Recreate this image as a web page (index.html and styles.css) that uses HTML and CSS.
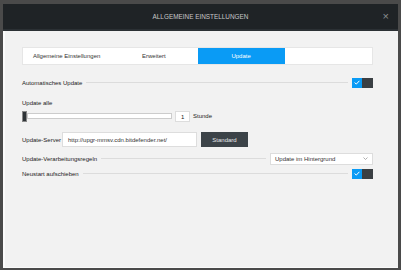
FILE: index.html
```html
<!DOCTYPE html>
<html lang="de">
<head>
    <meta charset="UTF-8">
    <title>Allgemeine Einstellungen</title>
    <link rel="stylesheet" href="styles.css">
</head>
<body>

<div class="dialog">
    <!-- Header -->
    <div class="dialog-header">
        <span class="dialog-title">ALLGEMEINE EINSTELLUNGEN</span>
        <span class="close-btn">&times;</span>
    </div>

    <div class="dialog-body">
        <!-- Tabs -->
        <div class="tabs">
            <div class="tab">Allgemeine Einstellungen</div>
            <div class="tab">Erweitert</div>
            <div class="tab active">Update</div>
            <div class="tab"></div>
        </div>

        <div class="row line-row first-row">
            <span class="label">Automatisches Update</span>
            <span class="rule"></span>
            <div class="toggle">
                <span class="toggle-on">
                    <svg width="6" height="5" viewBox="0 0 6 5"><path d="M0.6 2.6 L2.3 4.1 L5.4 0.8" fill="none" stroke="#fff" stroke-width="1"/></svg>
                </span>
                <span class="toggle-off"></span>
            </div>
        </div>

        <div class="label block-label">Update alle</div>
        <div class="row slider-row">
            <div class="slider">
                <span class="slider-handle"></span>
                <span class="slider-track"></span>
            </div>
            <div class="small-input">1</div>
            <span class="label">Stunde</span>
        </div>

        <div class="row server-row">
            <span class="label">Update-Server</span>
            <div class="text-input">http://upgr-mmsv.cdn.bitdefender.net/</div>
            <button class="std-btn">Standard</button>
        </div>

        <div class="row line-row rules-row">
            <span class="label">Update-Verarbeitungsregeln</span>
            <span class="rule"></span>
            <div class="select">
                <span>Update im Hintergrund</span>
                <svg width="5" height="3" viewBox="0 0 5 3"><path d="M0.5 0.5 L2.5 2.5 L4.5 0.5" fill="none" stroke="#999" stroke-width="0.8"/></svg>
            </div>
        </div>

        <div class="row line-row">
            <span class="label">Neustart aufschieben</span>
            <span class="rule"></span>
            <div class="toggle">
                <span class="toggle-on">
                    <svg width="6" height="5" viewBox="0 0 6 5"><path d="M0.6 2.6 L2.3 4.1 L5.4 0.8" fill="none" stroke="#fff" stroke-width="1"/></svg>
                </span>
                <span class="toggle-off"></span>
            </div>
        </div>
    </div>
</div>

</body>
</html>
```

FILE: styles.css
```css
body {
    margin: 0;
    background-color: #4a4a4a;
    font-family: "Liberation Sans", Arial, sans-serif;
    font-size: 6px;
    color: #222;
}

.dialog {
    margin: 4px 3px 0 3px;
    height: 263px;
    display: flex;
    flex-direction: column;
    background-color: #f2f2f2;
    border-bottom: 1px solid #fafafa;
}

.dialog-header {
    height: 25px;
    display: flex;
    align-items: center;
    justify-content: center;
    position: relative;
    background-color: #1f2326;
    border-bottom: 2px solid #2b3034;
}

.dialog-title {
    color: #c8c8c8;
    font-size: 6.4px;
}

.close-btn {
    position: absolute;
    right: 9px;
    top: 6px;
    color: #8a8d90;
    font-size: 11px;
}

.dialog-body {
    flex: 1;
    padding: 16px 25px 0 17px;
    border-left: 2px solid #fbfbfb;
}

.tabs {
    display: flex;
    height: 16px;
    background-color: #fff;
    border: 1px solid #e6e6e6;
}

.tab {
    flex: 1;
    display: flex;
    align-items: center;
    justify-content: center;
    color: #333;
}

.tab.active {
    background-color: #0a9bf5;
    color: #fff;
}

.row {
    display: flex;
    align-items: center;
}

.label {
    color: #222;
    white-space: nowrap;
}

.line-row {
    height: 11px;
    margin-top: 4px;
}

.first-row {
    margin-top: 12px;
}

.rules-row {
    margin-top: 6px;
}

.rule {
    flex: 1;
    height: 1px;
    background-color: #dcdcdc;
    margin: 0 4px 0 4px;
}

.toggle {
    display: flex;
    width: 21px;
    height: 10px;
}

.toggle-on {
    width: 10px;
    display: flex;
    align-items: center;
    justify-content: center;
    background-color: #0a9bf5;
}

.toggle-off {
    flex: 1;
    background-color: #3a3f43;
}

.block-label {
    margin-top: 12px;
}

.slider-row {
    margin-top: 4px;
    height: 12px;
}

.slider {
    display: flex;
    align-items: center;
    width: 150px;
}

.slider-handle {
    width: 5px;
    height: 11px;
    background-color: #2e3336;
    border: 1px solid #888;
    box-sizing: border-box;
}

.slider-track {
    flex: 1;
    height: 4px;
    background-color: #fff;
    border: 1px solid #ccc;
}

.small-input {
    width: 15px;
    height: 11px;
    margin-left: 3px;
    box-sizing: border-box;
    padding-left: 5px;
    line-height: 10px;
    background-color: #fff;
    border: 1px solid #ddd;
    margin-right: 3px;
}

.server-row {
    margin-top: 10px;
    height: 15px;
}

.text-input {
    width: 135px;
    height: 15px;
    box-sizing: border-box;
    margin-left: 1px;
    padding-left: 5px;
    line-height: 14px;
    background-color: #fff;
    border: 1px solid #ddd;
    color: #333;
}

.std-btn {
    width: 47px;
    height: 15px;
    margin-left: 4px;
    padding: 0;
    border: none;
    background-color: #3c4348;
    color: #e8e8e8;
    font-family: inherit;
    font-size: 6px;
}

.select {
    width: 103px;
    height: 12px;
    box-sizing: border-box;
    display: flex;
    align-items: center;
    justify-content: space-between;
    padding: 0 4px 0 4px;
    background-color: #fff;
    border: 1px solid #ddd;
    color: #333;
}
```
